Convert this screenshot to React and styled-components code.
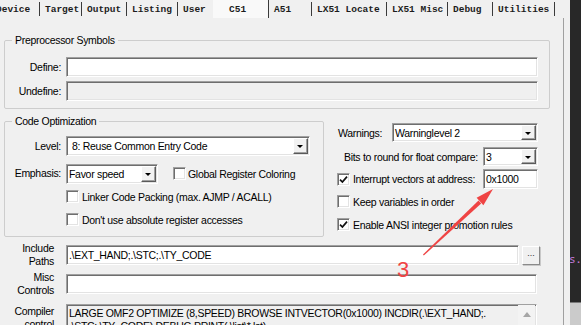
import React from "react";
import styled, { createGlobalStyle } from "styled-components";

const GlobalStyle = createGlobalStyle`
  html, body {
    margin: 0;
    padding: 0;
    background: #f0f0f0;
  }
  body {
    width: 581px;
    height: 325px;
    overflow: hidden;
    font-family: "Liberation Sans", Arial, sans-serif;
    font-size: 10.5px;
    letter-spacing: -0.3px;
    color: #000;
  }
`;

const Screen = styled.div`
  position: relative;
  display: flex;
  width: 581px;
  height: 325px;
  overflow: hidden;
`;

const Dialog = styled.div`
  flex: none;
  width: 570px;
  display: flex;
  flex-direction: column;
  background: #f0f0f0;
`;

const TabBar = styled.div`
  display: flex;
  height: 18px;
  margin-left: -9px;
  flex: none;
`;

const Tab = styled.div`
  flex: none;
  box-sizing: border-box;
  width: ${(p) => p.$w}px;
  height: ${(p) => (p.$active ? 18 : 14)}px;
  margin-top: ${(p) => (p.$active ? 0 : 2)}px;
  padding-left: ${(p) => (p.$active ? 16 : 5)}px;
  display: flex;
  align-items: center;
  border-right: 1px solid ${(p) => (p.$noSep ? "transparent" : "#3a3a3a")};
  background: ${(p) => (p.$active ? "#f9f9f9" : "transparent")};
  font: bold 9.5px "Liberation Mono", monospace;
  letter-spacing: 0;
  color: #1c1c1c;
  white-space: nowrap;
`;

const Page = styled.div`
  flex: 1;
  width: 564px;
  box-sizing: border-box;
  padding: 16px 0 0 4px;
  border-right: 1px solid #a0a0a0;
  display: flex;
  flex-direction: column;
`;

const Group = styled.fieldset`
  margin: 0;
  min-width: 0;
  box-sizing: border-box;
  width: ${(p) => p.$w}px;
  padding: ${(p) => p.$pad};
  border: 1px solid #cdcdcd;
  border-radius: 2px;
`;

const GroupTitle = styled.legend`
  margin-left: 7px;
  padding: 0 3px;
  line-height: 13px;
`;

const FormGrid = styled.div`
  display: grid;
  grid-template-columns: ${(p) => p.$label}px 1fr;
  column-gap: ${(p) => p.$gap}px;
  row-gap: ${(p) => p.$rowGap}px;
  align-items: center;
`;

const Label = styled.div`
  text-align: right;
  white-space: nowrap;
  line-height: 13px;
  align-self: ${(p) => (p.$top ? "start" : "center")};
  padding-top: ${(p) => (p.$top ? 2 : 0)}px;
  margin: ${(p) => (p.$multi ? "-3px 0" : "0")};
`;

const Sunken = styled.div`
  box-sizing: border-box;
  width: ${(p) => (p.$w ? `${p.$w}px` : "100%")};
  height: ${(p) => p.$h || 20}px;
  background: ${(p) => (p.$disabled ? "#f0f0f0" : "#fff")};
  border: 1px solid;
  border-color: #a0a0a0 #fff #fff #a0a0a0;
  box-shadow: inset 1px 1px 0 #6e6e6e, inset -1px -1px 0 #e3e3e3;
  display: flex;
  align-items: center;
  padding-left: ${(p) => p.$pad ?? 2}px;
  white-space: nowrap;
  overflow: hidden;
`;

const ComboText = styled.span`
  flex: 1;
  padding-left: ${(p) => p.$pad}px;
`;

const DropButton = styled.span`
  flex: none;
  align-self: stretch;
  width: 15px;
  margin: 1px 1px 1px 0;
  box-sizing: border-box;
  background: #f2f2f2;
  border: 1px solid;
  border-color: #fff #5a5a5a #5a5a5a #fff;
  box-shadow: inset -1px -1px 0 #a0a0a0;
  display: flex;
  align-items: center;
  justify-content: center;

  &::before {
    content: "";
    margin: 1px 1px 0 0;
    border-left: 3px solid transparent;
    border-right: 3px solid transparent;
    border-top: 3px solid #000;
  }
`;

const OptRow = styled.div`
  display: flex;
  align-items: flex-start;
  margin-top: 6px;
`;

const RightOptions = styled.div`
  width: 201px;
  margin-left: 13px;
  padding-top: 8px;
  display: flex;
  flex-direction: column;
`;

const OptLine = styled.div`
  display: flex;
  align-items: center;
  height: ${(p) => p.$h}px;
  margin-top: ${(p) => p.$mt || 0}px;
  padding-left: ${(p) => p.$indent || 0}px;
  white-space: nowrap;
`;

const Grow = styled.span`
  flex: 1;
`;

const CheckLine = styled.label`
  display: flex;
  align-items: center;
  gap: ${(p) => p.$gap ?? 3}px;
  height: ${(p) => p.$h || 23}px;
  margin-left: ${(p) => p.$ml || 0}px;
  margin-top: ${(p) => p.$mt || 0}px;
  white-space: nowrap;
`;

const Box = styled.span`
  flex: none;
  width: 13px;
  height: 13px;
  box-sizing: border-box;
  background: #fff;
  border: 1px solid;
  border-color: #a0a0a0 #fff #fff #a0a0a0;
  box-shadow: inset 1px 1px 0 #6e6e6e, inset -1px -1px 0 #e3e3e3;
  display: flex;
  align-items: center;
  justify-content: center;
`;

const EmphasisRow = styled.div`
  display: flex;
  align-items: center;
`;

const PathGrid = styled(FormGrid)`
  width: 536px;
  margin-top: 8px;
`;

const PathField = styled.div`
  display: flex;
  gap: 3px;
  align-items: center;
`;

const DotsButton = styled.button`
  flex: none;
  width: 18px;
  height: 19px;
  padding: 0 0 4px;
  box-sizing: border-box;
  background: #f0f0f0;
  border: 1px solid;
  border-color: #fff #8a8a8a #8a8a8a #fff;
  box-shadow: 1px 1px 0 #c8c8c8;
  font: 9px "Liberation Sans", sans-serif;
  color: #333;
  letter-spacing: 0;
`;

const ControlBox = styled(Sunken)`
  align-items: flex-start;
  margin-top: 1px;
  padding-top: 2px;
`;

const ControlText = styled.div`
  flex: 1;
  line-height: 13px;
`;

const ScrollBar = styled.div`
  flex: none;
  width: 17px;
  align-self: stretch;
  margin: -2px 1px 1px 0;
  background: #f3f3f3;
  display: flex;
  justify-content: center;
  padding-top: 7px;

  &::before {
    content: "";
    width: 0;
    height: 0;
    border-left: 4px solid transparent;
    border-right: 4px solid transparent;
    border-bottom: 5px solid #a6a6a6;
  }
`;

const DarkStrip = styled.div`
  flex: 1;
  background: #282828;
  display: flex;
  flex-direction: column;
`;

const CodeSnippet = styled.span`
  margin-top: 253px;
  margin-left: -1px;
  font: 11px "DejaVu Sans Mono", monospace;
  color: #c27ad8;
  white-space: nowrap;
`;

const StripFooter = styled.div`
  margin-top: auto;
  height: 22px;
  background: #cbcbcb;
  border-top: 1px solid #7a7a7a;
`;

const Annotation = styled.svg`
  position: absolute;
  left: 0;
  top: 0;
  pointer-events: none;
`;

const tabs = [
  { name: "Device", w: 49 },
  { name: "Target", w: 42 },
  { name: "Output", w: 45 },
  { name: "Listing", w: 51 },
  { name: "User", w: 35, noSep: true },
  { name: "C51", w: 56, active: true },
  { name: "A51", w: 43 },
  { name: "LX51 Locate", w: 75 },
  { name: "LX51 Misc", w: 61 },
  { name: "Debug", w: 45 },
  { name: "Utilities", w: 62 },
];

const Combo = ({ w, h, pad, children }) => (
  <Sunken $w={w} $h={h} $pad={0}>
    <ComboText $pad={pad}>{children}</ComboText>
    <DropButton />
  </Sunken>
);

const CheckBox = ({ checked }) => (
  <Box>
    {checked && (
      <svg width="9" height="9" viewBox="0 0 9 9">
        <path d="M1 4.6 L3.4 7 L8 1.6" fill="none" stroke="#111" strokeWidth="1.7" />
      </svg>
    )}
  </Box>
);

export default function App() {
  return (
    <>
      <GlobalStyle />
      <Screen>
        <Dialog>
          <TabBar>
            {tabs.map((t) => (
              <Tab key={t.name} $w={t.w} $active={t.active} $noSep={t.noSep}>
                {t.name}
              </Tab>
            ))}
          </TabBar>
          <Page>
            <Group $w={546} $pad="10px 11px 7px 0">
              <GroupTitle>Preprocessor Symbols</GroupTitle>
              <FormGrid $label={56} $gap={5} $rowGap={4}>
                <Label>Define:</Label>
                <Sunken />
                <Label>Undefine:</Label>
                <Sunken $disabled />
              </FormGrid>
            </Group>

            <OptRow>
              <Group $w={320} $pad="8px 0 5px 0">
                <GroupTitle>Code Optimization</GroupTitle>
                <FormGrid $label={56} $gap={5} $rowGap={6}>
                  <Label>Level:</Label>
                  <Combo w={244} pad={5}>8: Reuse Common Entry Code</Combo>
                  <Label>Emphasis:</Label>
                  <EmphasisRow>
                    <Combo w={92} pad={2}>Favor speed</Combo>
                    <CheckLine $ml={15} $gap={2}>
                      <CheckBox />
                      Global Register Coloring
                    </CheckLine>
                  </EmphasisRow>
                </FormGrid>
                <FormGrid $label={56} $gap={5} $rowGap={0}>
                  <span />
                  <CheckLine>
                    <CheckBox />
                    Linker Code Packing (max. AJMP / ACALL)
                  </CheckLine>
                  <span />
                  <CheckLine>
                    <CheckBox />
                    Don't use absolute register accesses
                  </CheckLine>
                </FormGrid>
              </Group>

              <RightOptions>
                <OptLine $h={19} $indent={1}>
                  <Grow>Warnings:</Grow>
                  <Combo w={146} h={19} pad={2}>Warninglevel 2</Combo>
                </OptLine>
                <OptLine $h={19} $mt={5} $indent={7}>
                  <Grow>Bits to round for float compare:</Grow>
                  <Combo w={55} h={19} pad={2}>3</Combo>
                </OptLine>
                <OptLine $h={20} $mt={3}>
                  <CheckLine $h={20}>
                    <CheckBox checked />
                    Interrupt vectors at address:
                  </CheckLine>
                  <Grow />
                  <Sunken $w={55}>0x1000</Sunken>
                </OptLine>
                <CheckLine $mt={1}>
                  <CheckBox />
                  Keep variables in order
                </CheckLine>
                <CheckLine>
                  <CheckBox checked />
                  Enable ANSI integer promotion rules
                </CheckLine>
              </RightOptions>
            </OptRow>

            <PathGrid $label={50} $gap={12} $rowGap={9}>
              <Label $multi>
                Include
                <br />
                Paths
              </Label>
              <PathField>
                <Sunken $pad={2}>{".\\EXT_HAND;.\\STC;.\\TY_CODE"}</Sunken>
                <DotsButton>...</DotsButton>
              </PathField>
              <Label $multi>
                Misc
                <br />
                Controls
              </Label>
              <Sunken $w={471} />
              <Label $top>
                Compiler
                <br />
                control
              </Label>
              <ControlBox $w={471} $h={40} $disabled>
                <ControlText>
                  <div>{"LARGE OMF2 OPTIMIZE (8,SPEED) BROWSE INTVECTOR(0x1000) INCDIR(.\\EXT_HAND;."}</div>
                  <div>{".\\STC;.\\TY_CODE) DEBUG PRINT(.\\list\\*.lst)"}</div>
                </ControlText>
                <ScrollBar />
              </ControlBox>
            </PathGrid>
          </Page>
        </Dialog>
        <DarkStrip>
          <CodeSnippet>s.</CodeSnippet>
          <StripFooter />
        </DarkStrip>

        <Annotation width="581" height="325" viewBox="0 0 581 325">
          <polygon points="423,254.6 423.8,255.4 481.2,203.5 478.5,200.6" fill="#ef4444" />
          <polygon points="493,189 483.4,205.2 476.6,197.8" fill="#ef4444" />
          <text
            x="397"
            y="277"
            fontSize="22"
            fontFamily="Liberation Sans, Arial, sans-serif"
            fill="#f04343"
          >
            3
          </text>
        </Annotation>
      </Screen>
    </>
  );
}
